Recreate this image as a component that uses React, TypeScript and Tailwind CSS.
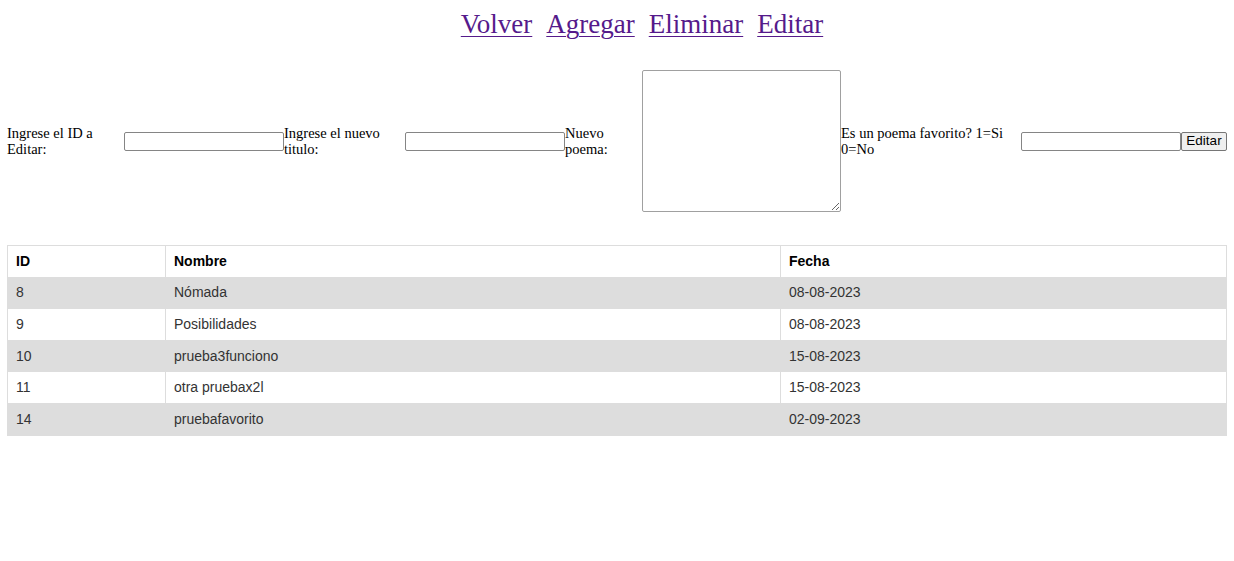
const links = ["Volver", "Agregar", "Eliminar", "Editar"]

const poemas = [
  { id: 8, nombre: "Nómada", fecha: "08-08-2023" },
  { id: 9, nombre: "Posibilidades", fecha: "08-08-2023" },
  { id: 10, nombre: "prueba3funciono", fecha: "15-08-2023" },
  { id: 11, nombre: "otra pruebax2l", fecha: "15-08-2023" },
  { id: 14, nombre: "pruebafavorito", fecha: "02-09-2023" },
]

const serif = "font-['Liberation_Serif','Times_New_Roman',serif]"
const sans = "font-['Liberation_Sans',Arial,sans-serif]"

function Label({ text, w }: { text: string; w: string }) {
  return <label className={`${w} shrink-0 text-[14.5px] leading-[16px] text-black ${serif}`}>{text}</label>
}

function Field() {
  return (
    <input
      type="text"
      className="w-[160px] h-[19px] shrink-0 border border-[#858585] rounded-[2px] bg-white outline-none"
    />
  )
}

export default function App() {
  return (
    <div className="min-h-screen bg-white">
      <nav className="flex justify-center gap-[14px] pt-[9px] pl-[50px]">
        {links.map((l) => (
          <a
            key={l}
            href="#"
            className={`${serif} text-[27px] leading-[30px] text-[#551a8b] underline decoration-1 underline-offset-[3px]`}
          >
            {l}
          </a>
        ))}
      </nav>

      <form className="mt-[31px] flex items-center px-[7px]" onSubmit={(e) => e.preventDefault()}>
        <Label text="Ingrese el ID a Editar:" w="w-[117px]" />
        <Field />
        <Label text="Ingrese el nuevo titulo:" w="w-[121px]" />
        <Field />
        <Label text="Nuevo poema:" w="w-[77px]" />
        <textarea className="w-[199px] h-[142px] shrink-0 border border-[#a0a0a0] rounded-[2px] bg-white outline-none" />
        <Label text="Es un poema favorito? 1=Si 0=No" w="w-[180px]" />
        <Field />
        <button
          type="submit"
          className={`${sans} w-[46px] h-[19px] shrink-0 text-[13.5px] leading-none text-black bg-[#efefef] border border-[#767676] rounded-[2px]`}
        >
          Editar
        </button>
      </form>

      <div className="mt-[33px] px-[7px]">
        <table className={`${sans} w-full border-collapse border border-[#ddd] text-[14px] text-[#333]`}>
          <thead>
            <tr className="h-[31.6px] bg-white">
              <th className="w-[158px] border border-[#ddd] px-2 text-left font-bold text-black">ID</th>
              <th className="w-[615px] border border-[#ddd] px-2 text-left font-bold text-black">Nombre</th>
              <th className="border border-[#ddd] px-2 text-left font-bold text-black">Fecha</th>
            </tr>
          </thead>
          <tbody>
            {poemas.map((p, i) => (
              <tr key={p.id} className={`h-[31.6px] ${i % 2 === 0 ? "bg-[#dddddd]" : "bg-white"}`}>
                <td className="border border-[#ddd] px-2">{p.id}</td>
                <td className="border border-[#ddd] px-2">{p.nombre}</td>
                <td className="border border-[#ddd] px-2">{p.fecha}</td>
              </tr>
            ))}
          </tbody>
        </table>
      </div>
    </div>
  )
}
